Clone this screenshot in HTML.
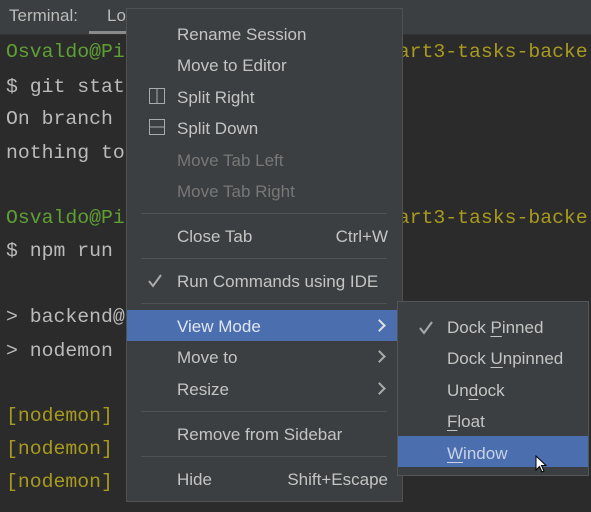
<!DOCTYPE html>
<html><head><style>
body{margin:0;width:591px;height:512px;overflow:hidden;background:#2b2b2b;position:relative;font-family:"Liberation Sans",sans-serif}
.tb{position:absolute;left:0;top:0;width:591px;height:34px;background:#3c3f41;border-bottom:1px solid #323232}
.tl{position:absolute;top:6px;font-size:17px;color:#bbb}
.ul{position:absolute;left:89px;top:31px;width:50px;height:3px;background:#8a8a8a}
.t{position:absolute;left:6px;font-family:"Liberation Mono",monospace;font-size:19.8px;color:#bbbbbb;white-space:pre;line-height:24px}
.g{color:#5fa035}.y{color:#a89a1e}
.m{position:absolute;left:126px;top:8px;width:275px;height:492px;background:#3c3f41;border:1px solid #515151}
.i{position:absolute;left:50px;font-size:17px;color:#c4c4c4;white-space:nowrap;line-height:20px}
.d{color:#777}
.s{position:absolute;left:14px;width:246px;height:1px;background:#515151}
.hl{position:absolute;left:0;width:275px;height:31px;background:#4b6eaf}
.k{position:absolute;right:14px;font-size:17px;color:#c4c4c4;line-height:20px}
.ar{position:absolute;left:248px;width:7px;height:7px;border-right:2px solid #aaa;border-top:2px solid #aaa;transform:rotate(45deg)}
.sm{position:absolute;left:397px;top:301px;width:190px;height:173px;background:#3c3f41;border:1px solid #555}
.si{position:absolute;left:49px;font-size:17px;color:#c4c4c4;line-height:20px}
u{text-decoration-thickness:1px;text-underline-offset:3px}
</style></head><body>
<div class="tb"></div>
<div class="tl" style="left:9px">Terminal:</div>
<div class="tl" style="left:107px">Lo</div>
<div class="ul"></div>
<div class="t g" style="top:40px">Osvaldo@Pi<span class="y">                       art3-tasks-backe</span></div>
<div class="t" style="top:75px">$ git stat</div>
<div class="t" style="top:107px">On branch</div>
<div class="t" style="top:141px">nothing to</div>
<div class="t g" style="top:206px">Osvaldo@Pi<span class="y">                       art3-tasks-backe</span></div>
<div class="t" style="top:239px">$ npm run</div>
<div class="t" style="top:305px">&gt; backend@</div>
<div class="t" style="top:339px">&gt; nodemon</div>
<div class="t y" style="top:404px">[nodemon]</div>
<div class="t y" style="top:437px">[nodemon]</div>
<div class="t y" style="top:470px">[nodemon]</div>

<div class="m">
<div class="i" style="top:16px">Rename Session</div>
<div class="i" style="top:47px">Move to Editor</div>
<svg style="position:absolute;left:22px;top:79px" width="16" height="16"><rect x="0.5" y="0.5" width="15" height="15" fill="none" stroke="#aaa"/><line x1="8" y1="0" x2="8" y2="16" stroke="#aaa"/></svg>
<div class="i" style="top:79px">Split Right</div>
<svg style="position:absolute;left:22px;top:110px" width="16" height="16"><rect x="0.5" y="0.5" width="15" height="15" fill="none" stroke="#aaa"/><line x1="0" y1="8" x2="16" y2="8" stroke="#aaa"/></svg>
<div class="i" style="top:110px">Split Down</div>
<div class="i d" style="top:142px">Move Tab Left</div>
<div class="i d" style="top:173px">Move Tab Right</div>
<div class="s" style="top:204px"></div>
<div class="i" style="top:218px">Close Tab</div><div class="k" style="top:218px">Ctrl+W</div>
<div class="s" style="top:249px"></div>
<svg style="position:absolute;left:20px;top:264px" width="16" height="16"><path d="M2 8 L6 13 L14 2" fill="none" stroke="#aaa" stroke-width="2"/></svg>
<div class="i" style="top:263px">Run Commands using IDE</div>
<div class="s" style="top:294px"></div>
<div class="hl" style="top:301px"></div>
<div class="i" style="top:308px;color:#dfe6f2">View Mode</div><div class="ar" style="top:312px;border-color:#e0e0e0"></div>
<div class="i" style="top:339px">Move to</div><div class="ar" style="top:343px"></div>
<div class="i" style="top:371px">Resize</div><div class="ar" style="top:375px"></div>
<div class="s" style="top:402px"></div>
<div class="i" style="top:416px">Remove from Sidebar</div>
<div class="s" style="top:447px"></div>
<div class="i" style="top:461px">Hide</div><div class="k" style="top:461px">Shift+Escape</div>
</div>

<div class="sm">
<svg style="position:absolute;left:20px;top:18px" width="16" height="16"><path d="M2 8 L6 13 L14 2" fill="none" stroke="#aaa" stroke-width="2"/></svg>
<div class="si" style="top:16px">Dock <u>P</u>inned</div>
<div class="si" style="top:47px">Dock <u>U</u>npinned</div>
<div class="si" style="top:79px">Un<u>d</u>ock</div>
<div class="si" style="top:110px"><u>F</u>loat</div>
<div style="position:absolute;left:0;top:134px;width:190px;height:31px;background:#4b6eaf"></div>
<div class="si" style="top:142px;color:#c8d2e4"><u>W</u>indow</div>
<svg style="position:absolute;left:137px;top:153px" width="14" height="20"><path d="M1 1 L1 15 L4.5 11.5 L7 17 L9 16 L6.5 10.5 L11 10.5 Z" fill="#fff" stroke="#000" stroke-width="1"/></svg>
</div>
</body></html>
